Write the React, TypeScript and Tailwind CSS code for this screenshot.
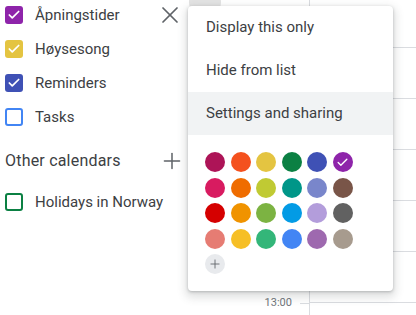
import { Check, Plus, X } from "lucide-react";

const font = { fontFamily: "Roboto, 'Noto Sans', sans-serif" };

const swatches = [
  ["#ad1457", "#f4511e", "#e4c441", "#0b8043", "#3f51b5", "#8e24aa"],
  ["#d81b60", "#ef6c00", "#c0ca33", "#009688", "#7986cb", "#795548"],
  ["#d50000", "#f09300", "#7cb342", "#039be5", "#b39ddb", "#616161"],
  ["#e67c73", "#f6bf26", "#33b679", "#4285f4", "#9e69af", "#a79b8e"],
];

type Cal = { name: string; color: string; checked: boolean };

const myCals: Cal[] = [
  { name: "Åpningstider", color: "#8e24aa", checked: true },
  { name: "Høysesong", color: "#e4c441", checked: true },
  { name: "Reminders", color: "#3f51b5", checked: true },
  { name: "Tasks", color: "#4285f4", checked: false },
];

function CalRow({ cal, close }: { cal: Cal; close?: boolean }) {
  return (
    <div className="flex items-center h-[34px] pl-[5px]">
      <div
        className="w-[18px] h-[18px] rounded-[3px] flex items-center justify-center"
        style={
          cal.checked
            ? { backgroundColor: cal.color }
            : { border: `2px solid ${cal.color}` }
        }
      >
        {cal.checked && <Check size={14} strokeWidth={3} color="#fff" />}
      </div>
      <span className="ml-[12px] text-[15px] text-[#3c4043] flex-1">{cal.name}</span>
      {close && <X size={28} strokeWidth={1.5} color="#5f6368" className="mr-[4px]" />}
    </div>
  );
}

export default function App() {
  return (
    <div className="relative w-[416px] h-[315px] overflow-hidden bg-white flex" style={font}>
      {/* sidebar */}
      <div className="w-[188px] shrink-0 -mt-[2px]">
        {myCals.map((c, i) => (
          <CalRow key={c.name} cal={c} close={i === 0} />
        ))}
        <div className="flex items-center h-[40px] mt-[7px] mb-[4px] pl-[5px] pr-[3px]">
          <span className="flex-1 text-[16px] tracking-[0.2px] text-[#3c4043]">Other calendars</span>
          <Plus size={26} strokeWidth={1.4} color="#5f6368" />
        </div>
        <CalRow cal={{ name: "Holidays in Norway", color: "#0b8043", checked: false }} />
      </div>

      {/* time gutter */}
      <div className="w-[121px] shrink-0 flex flex-col">
        <div className="h-[296px]" />
        <div className="flex items-center h-[14px]">
          <span className="ml-auto text-[11px] text-[#70757a]">13:00</span>
          <div className="ml-[8px] w-[9px] h-px bg-[#dadce0]" />
        </div>
      </div>

      {/* day column */}
      <div className="flex-1 border-l border-[#dadce0] flex flex-col">
        <div className="h-[48px] shrink-0 border-b border-[#dadce0]" />
        {[0, 1, 2, 3, 4].map((i) => (
          <div key={i} className="h-[51px] shrink-0 border-b border-[#dadce0]" />
        ))}
      </div>

      {/* hover circle behind menu */}
      <div className="absolute left-[189px] -top-[14px] w-[32px] h-[32px] rounded-full bg-[#e3e3e3]" />

      {/* menu */}
      <div className="absolute left-[188px] top-[6px] w-[205px] h-[285px] bg-white rounded-[4px] shadow-[0_4px_8px_3px_rgba(60,64,67,0.15),0_1px_3px_rgba(60,64,67,0.3)]">
        {["Display this only", "Hide from list", "Settings and sharing"].map((t, i) => (
          <div
            key={t}
            className={`h-[43px] flex items-center pl-[18px] text-[15px] text-[#3c4043] ${
              i === 2 ? "bg-[#f1f3f4]" : ""
            }`}
          >
            {t}
          </div>
        ))}
        <div className="pl-[17px] pt-[17px] flex flex-col gap-[5.6px]">
          {swatches.map((row, r) => (
            <div key={r} className="flex gap-[5.6px]">
              {row.map((c) => (
                <div
                  key={c}
                  className="w-[20px] h-[20px] rounded-full flex items-center justify-center"
                  style={{ backgroundColor: c }}
                >
                  {c === "#8e24aa" && <Check size={13} strokeWidth={2.5} color="#fff" />}
                </div>
              ))}
            </div>
          ))}
          <div className="w-[20px] h-[20px] rounded-full bg-[#e8eaed] flex items-center justify-center">
            <Plus size={14} strokeWidth={1.5} color="#5f6368" />
          </div>
        </div>
      </div>
    </div>
  );
}
